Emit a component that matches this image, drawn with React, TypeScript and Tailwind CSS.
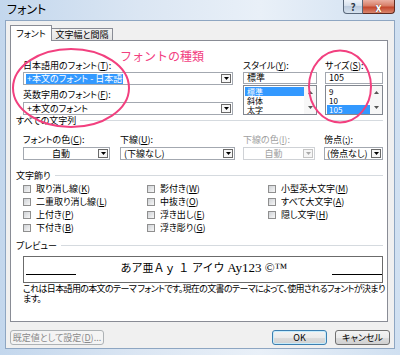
import React from "react";

const U = ({ c }: { c: string }) => (
  <span className="underline underline-offset-[1px] decoration-[0.5px]">{c}</span>
);

function Arrow({ disabled }: { disabled?: boolean }) {
  return (
    <div
      className={`w-[10px] h-[9px] mr-[1px] flex items-center justify-center border ${
        disabled ? "border-[#c4c4c4] bg-[#f6f6f6]" : "border-[#6a6a6a] bg-[#f7f7f7]"
      }`}
    >
      <svg width="5" height="3" viewBox="0 0 5 3">
        <path d="M0 0H5L2.5 3Z" fill={disabled ? "#a9a9a9" : "#000"} />
      </svg>
    </div>
  );
}

function Label({ children, className = "" }: { children: React.ReactNode; className?: string }) {
  return <div className={`h-[11px] text-[9px] leading-[11px] whitespace-nowrap ${className}`}>{children}</div>;
}

function Header({ children, className = "" }: { children: React.ReactNode; className?: string }) {
  return (
    <div className={`ml-[5px] w-[367px] h-[11px] flex items-center ${className}`}>
      <span className="text-[9px] leading-[11px] whitespace-nowrap">{children}</span>
      <div className="flex-1 h-px bg-[#d5dadf] ml-[4px]" />
    </div>
  );
}

function Check({ children }: { children: React.ReactNode }) {
  return (
    <div className="h-[13px] flex items-center">
      <div className="w-[8px] h-[8px] border border-[#8f8f8f] bg-[linear-gradient(135deg,#cfd2d6,#f7f7f7)]" />
      <span className="ml-[5px] text-[9px] leading-[11px] whitespace-nowrap">{children}</span>
    </div>
  );
}

function ScrollCol() {
  return (
    <div className="w-[12px] flex flex-col items-center justify-between py-[5px] bg-[#f7f7f7]">
      <svg width="5" height="3" viewBox="0 0 5 3">
        <path d="M0 3H5L2.5 0Z" fill="#555" />
      </svg>
      <svg width="5" height="3" viewBox="0 0 5 3">
        <path d="M0 0H5L2.5 3Z" fill="#555" />
      </svg>
    </div>
  );
}

function Item({ children, sel }: { children: React.ReactNode; sel?: boolean }) {
  return (
    <div
      className={`h-[9px] flex items-center text-[8px] leading-[8px] pl-[2px] ${
        sel ? "bg-[#3399ff] text-white" : ""
      }`}
    >
      {children}
    </div>
  );
}

export default function App() {
  return (
    <div className="relative w-[400px] h-[355px] overflow-hidden bg-[linear-gradient(90deg,#c3d7ed_0%,#dbe6f3_35%,#e9f0f8_65%,#d0e0f1_100%)] font-['Noto_Sans_CJK_JP',sans-serif] [font-feature-settings:'palt'] text-black">
      {/* Title bar */}
      <div className="h-[20px] flex justify-between items-start">
        <div className="pl-[7px] pt-[3px] text-[12px] leading-[12px]">フォント</div>
        <div className="flex mr-[5px]">
          <div className="w-[20px] h-[14px] rounded-bl-[4px] border border-t-0 border-[#58677a] bg-[linear-gradient(#eef3f9,#d3deeb_50%,#bccbdd_50%,#d6e2ef)] flex items-center justify-center text-[10px] leading-[10px] font-bold text-[#2e3a48]">
            ?
          </div>
          <div className="w-[32px] h-[14px] rounded-br-[4px] border border-t-0 border-l-0 border-[#5e2a20] bg-[linear-gradient(#eab0a3,#d77d66_45%,#c4472d_55%,#d9866d)] flex items-center justify-center text-[11px] leading-[10px] font-bold text-white [text-shadow:0_0_1px_#3a1008]">
            x
          </div>
        </div>
      </div>

      {/* Client area */}
      <div className="mx-[5px] h-[329px] bg-[#f0f0f0] border border-[#8ea6c2] flex flex-col">
        {/* Tabs */}
        <div className="ml-[4px] mt-[4px] h-[15px] flex items-end">
          <div className="relative z-10 w-[42px] h-[16px] -mb-[1px] bg-white border border-b-0 border-[#898c95] flex items-center justify-center text-[9px] leading-[11px]">
            フォント
          </div>
          <div className="w-[61px] h-[12px] border-t border-r border-[#898c95] bg-[linear-gradient(#f3f3f3,#e2e2e2)] flex items-center justify-center text-[9px] leading-[11px]">
            文字幅と間隔
          </div>
        </div>

        {/* Panel */}
        <div className="ml-[4px] w-[378px] h-[282px] bg-white border border-[#898c95] flex flex-col pt-[19px]">
          {/* Font row */}
          <div className="flex pl-[12px]">
            <div className="w-[210px] flex flex-col">
              <Label>
                日本語用のフォント(<U c="T" />):
              </Label>
              <div className="mt-[1px] h-[13px] border border-[#a3a8b0] bg-white flex items-center">
                <span className="ml-[2px] px-[1px] bg-[#3399ff] text-white text-[9px] leading-[10px] whitespace-nowrap">
                  +本文のフォント - 日本語
                </span>
                <div className="flex-1" />
                <Arrow />
              </div>
              <Label className="mt-[4px]">
                英数字用のフォント(<U c="F" />):
              </Label>
              <div className="mt-[2px] h-[13px] border border-[#a3a8b0] bg-white flex items-center">
                <span className="ml-[3px] text-[9px] leading-[10px] whitespace-nowrap">+本文のフォント</span>
                <div className="flex-1" />
                <Arrow />
              </div>
            </div>

            <div className="ml-[10px] w-[74px] flex flex-col">
              <Label>
                スタイル(<U c="Y" />):
              </Label>
              <div className="mt-[1px] h-[12px] border border-[#a3a8b0] bg-white flex items-center">
                <span className="ml-[3px] text-[9px] leading-[10px]">標準</span>
              </div>
              <div className="mt-[1px] h-[30px] border border-[#828790] bg-white flex">
                <div className="flex-1 flex flex-col pt-[1px] pl-[1px]">
                  <Item sel>標準</Item>
                  <Item>斜体</Item>
                  <Item>太字</Item>
                </div>
                <ScrollCol />
              </div>
            </div>

            <div className="ml-[8px] w-[58px] flex flex-col">
              <Label>
                サイズ(<U c="S" />):
              </Label>
              <div className="mt-[1px] h-[12px] border border-[#a3a8b0] bg-white flex items-center">
                <span className="ml-[3px] text-[9px] leading-[10px]">105</span>
              </div>
              <div className="mt-[1px] h-[30px] border border-[#828790] bg-white flex">
                <div className="flex-1 flex flex-col pt-[1px] pl-[1px]">
                  <Item>9</Item>
                  <Item>10</Item>
                  <Item sel>105</Item>
                </div>
                <ScrollCol />
              </div>
            </div>
          </div>

          {/* All text */}
          <Header>すべての文字列</Header>
          <div className="flex pl-[12px] mt-[8px]">
            <div className="w-[87px] flex flex-col">
              <Label>
                フォントの色(<U c="C" />):
              </Label>
              <div className="mt-[2px] h-[13px] border border-[#a3a8b0] bg-white flex items-center">
                <span className="flex-1 text-center text-[9px] leading-[10px]">自動</span>
                <Arrow />
              </div>
            </div>
            <div className="ml-[10px] w-[115px] flex flex-col">
              <Label>
                下線(<U c="U" />):
              </Label>
              <div className="mt-[2px] h-[13px] border border-[#a3a8b0] bg-white flex items-center">
                <span className="ml-[3px] flex-1 text-[9px] leading-[10px] whitespace-nowrap">(下線なし)</span>
                <Arrow />
              </div>
            </div>
            <div className="ml-[8px] w-[72px] flex flex-col">
              <Label className="text-[#a0a0a0]">
                下線の色(<U c="I" />):
              </Label>
              <div className="mt-[2px] h-[13px] border border-[#cfd2d6] bg-white flex items-center">
                <span className="flex-1 text-center text-[9px] leading-[10px] text-[#a0a0a0]">自動</span>
                <Arrow disabled />
              </div>
            </div>
            <div className="ml-[9px] w-[59px] flex flex-col">
              <Label>
                傍点(<U c=";" />):
              </Label>
              <div className="mt-[2px] h-[13px] border border-[#a3a8b0] bg-white flex items-center">
                <span className="ml-[2px] flex-1 text-[9px] leading-[10px] whitespace-nowrap">(傍点なし)</span>
                <Arrow />
              </div>
            </div>
          </div>

          {/* Effects */}
          <Header className="mt-[10px]">文字飾り</Header>
          <div className="flex pl-[12px] mt-[1px]">
            <div className="w-[124px] flex flex-col">
              <Check>
                取り消し線(<U c="K" />)
              </Check>
              <Check>
                二重取り消し線(<U c="L" />)
              </Check>
              <Check>
                上付き(<U c="P" />)
              </Check>
              <Check>
                下付き(<U c="B" />)
              </Check>
            </div>
            <div className="w-[121px] flex flex-col">
              <Check>
                影付き(<U c="W" />)
              </Check>
              <Check>
                中抜き(<U c="O" />)
              </Check>
              <Check>
                浮き出し(<U c="E" />)
              </Check>
              <Check>
                浮き彫り(<U c="G" />)
              </Check>
            </div>
            <div className="flex flex-col">
              <Check>
                小型英大文字(<U c="M" />)
              </Check>
              <Check>
                すべて大文字(<U c="A" />)
              </Check>
              <Check>
                隠し文字(<U c="H" />)
              </Check>
            </div>
          </div>

          {/* Preview */}
          <Header className="mt-[6px]">プレビュー</Header>
          <div className="ml-[12px] mt-[5px] w-[360px] h-[27px] border border-[#6b6b6b] bg-white flex items-start">
            <div className="ml-[2px] mt-[17px] w-[50px] h-px bg-black" />
            <div className="flex-1 mt-[4px] text-center text-[11px] leading-[13px] whitespace-nowrap font-['Liberation_Serif','Noto_Sans_CJK_JP',serif] [font-feature-settings:normal]">
              あア亜Ａｙ １ アイウ <span className="text-[13px]">Ay123 ©™</span>
            </div>
            <div className="mt-[17px] w-[50px] h-px bg-black" />
          </div>
          <div className="ml-[12px] mt-[1px] text-[9px] leading-[10px] whitespace-nowrap tracking-[-0.65px]">
            <div>これは日本語用の本文のテーマ フォントです。現在の文書のテーマによって、使用されるフォントが決まり</div>
            <div>ます。</div>
          </div>
        </div>

        {/* Buttons */}
        <div className="mt-[8px] h-[15px] flex">
          <div className="ml-[4px] w-[94px] h-[15px] rounded-[3px] border border-[#adb2b5] bg-[#f4f4f4] flex items-center justify-center text-[9px] leading-[11px] text-[#8a8a8a] whitespace-nowrap">
            既定値として設定(<U c="D" />)...
          </div>
          <div className="flex-1" />
          <div className="w-[55px] h-[15px] rounded-[3px] border border-[#3c7fb1] bg-[linear-gradient(#f3f3f3,#ebebeb_50%,#dddddd_50%,#d1d1d1)] shadow-[inset_0_0_0_1px_#c6ecfc] flex items-center justify-center text-[9px] leading-[11px]">
            OK
          </div>
          <div className="ml-[8px] mr-[4px] w-[55px] h-[15px] rounded-[3px] border border-[#707070] bg-[linear-gradient(#f3f3f3,#ebebeb_50%,#dddddd_50%,#d1d1d1)] flex items-center justify-center text-[9px] leading-[11px]">
            キャンセル
          </div>
        </div>
      </div>

      {/* Annotations */}
      <div className="absolute left-[120px] top-[50px] text-[12px] leading-[12px] text-[#f2407f] [font-feature-settings:normal] whitespace-nowrap">
        フォントの種類
      </div>
      <svg className="absolute left-0 top-0 pointer-events-none" width="400" height="355" viewBox="0 0 400 355">
        <ellipse cx="71" cy="88" rx="58" ry="39" fill="none" stroke="#f2407f" strokeWidth="2" />
        <ellipse cx="340" cy="86.5" rx="31" ry="36" fill="none" stroke="#f2407f" strokeWidth="2" />
      </svg>
    </div>
  );
}
